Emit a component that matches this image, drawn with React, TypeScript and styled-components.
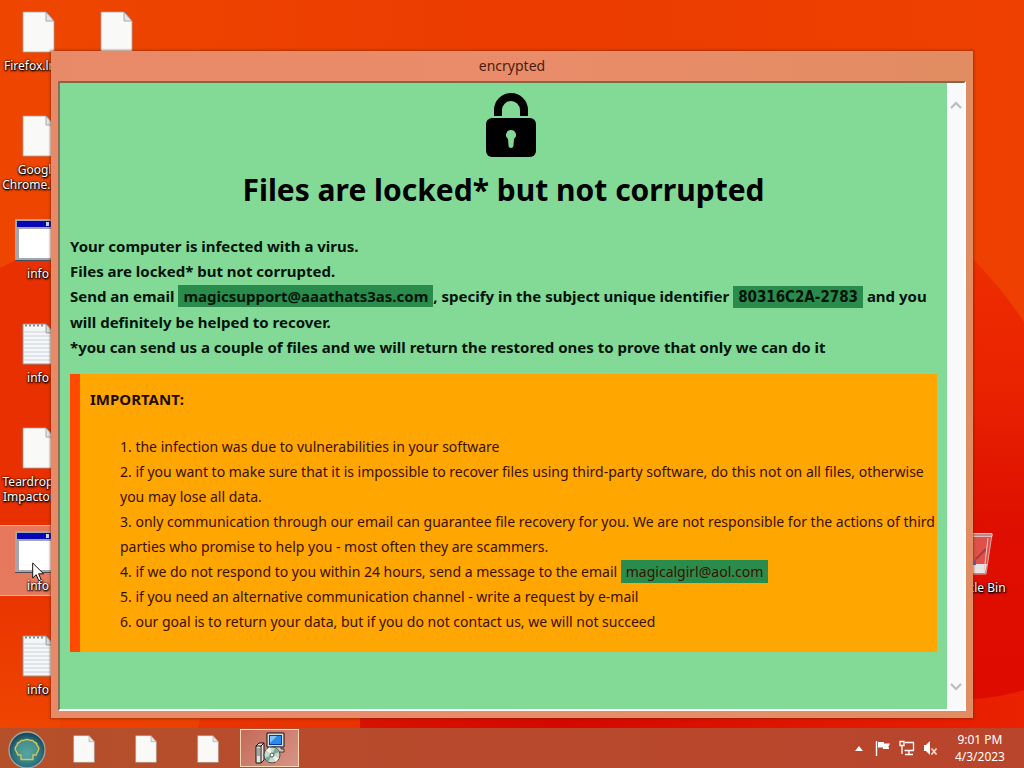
import React from 'react';
import styled, { createGlobalStyle, css } from 'styled-components';

const Global = createGlobalStyle`
  *, *::before, *::after { box-sizing: border-box; }
  html, body { margin: 0; padding: 0; }
  button { font: inherit; color: inherit; padding: 0; border: 0; background: none; }
`;

const Desktop = styled.div`
  position: relative;
  display: flex;
  flex-direction: column;
  min-height: 100vh;
  overflow: hidden;
  isolation: isolate;
  background: #e93200;
  font-family: 'Noto Sans', 'Open Sans', sans-serif;
`;

const Wallpaper = styled.svg`
  position: absolute;
  inset: 0;
  width: 100%;
  height: 100%;
  z-index: -1;
`;

const Workspace = styled.main`
  position: relative;
  flex: 1;
  display: flex;
  flex-direction: column;
  padding: 51px 51px 10px;
`;

const IconGrid = styled.div`
  position: absolute;
  inset: 0 0 0 -1px;
  display: grid;
  grid-auto-flow: column;
  grid-template-rows: repeat(7, 104px);
  grid-auto-columns: 78px;
  justify-content: start;
`;

const Shortcut = styled.button<{ $selected?: boolean; $col: number; $row: number }>`
  grid-column: ${(p) => p.$col};
  grid-row: ${(p) => p.$row};
  align-self: start;
  display: flex;
  flex-direction: column;
  align-items: center;
  gap: 5px;
  height: 71px;
  margin-top: 5px;
  padding-top: 6px;
  font-size: 12px;
  line-height: 15px;
  color: #fff;
  text-shadow: 1px 1px 2px #000, 0 1px 2px #000, 0 0 2px #000;
  white-space: pre;
  ${(p) =>
    p.$selected &&
    css`
      background: rgba(228, 180, 170, 0.55);
      box-shadow: inset 0 0 0 1px rgba(255, 210, 190, 0.6);
    `}
  svg {
    flex: none;
  }
`;

const AppWindow = styled.section`
  position: relative;
  flex: 1;
  display: flex;
  flex-direction: column;
  padding: 0 7px 7px;
  background: linear-gradient(90deg, #e88a68, #ea8c6a 50%, #e28c62);
  box-shadow: 0 0 2px 1px rgba(110, 40, 10, 0.55);
`;

const TitleBar = styled.header`
  height: 30px;
  line-height: 30px;
  font-size: 14px;
  text-align: center;
  color: #4a1c10;
`;

const Client = styled.div`
  flex: 1;
  display: flex;
  border: 2px solid #fff;
  border-top-color: #86654a;
  border-left-color: #86705a;
  background: #83d996;
`;

const Note = styled.article`
  flex: 1;
  min-width: 0;
  padding: 10px 10px 55px;
  font-size: 15px;
  line-height: 25px;
  color: #04140a;
`;

const NoteHead = styled.div`
  display: flex;
  flex-direction: column;
  align-items: center;
  padding-left: 15px;
`;

const Headline = styled.h1`
  margin: 8px 15px 0 0;
  font-size: 30px;
  line-height: 48px;
  color: #000;
`;

const Lead = styled.p`
  margin: 20px 0 14px;
  font-weight: bold;
`;

const Mark = styled.span`
  padding: 1px 5px;
  background: #2a8c4c;
`;

const Identifier = styled(Mark)`
  padding: 2px 5px;
  font-family: 'DejaVu Sans Condensed', 'DejaVu Sans', sans-serif;
  font-stretch: condensed;
`;

const Important = styled.div`
  padding: 13px 0 18px 10px;
  border-left: 10px solid #ff4a00;
  background: #ffa600;
  color: #3a1000;
`;

const ImportantTitle = styled.h2`
  margin: 0 0 22px;
  font-size: 15px;
  line-height: 25px;
  color: #1c0c00;
`;

const Rules = styled.ol`
  margin: 0;
  padding: 0 0 0 30px;
  list-style-position: inside;
  font-size: 14px;

  ${Mark} {
    padding: 2px 5px;
  }
`;

const Scrollbar = styled.div`
  display: flex;
  flex-direction: column;
  justify-content: space-between;
  width: 17px;
  padding: 15px 2px;
  background: #f9f8fa;
`;

const ScrollButton = styled.button`
  height: 14px;
  display: flex;
  align-items: center;
  justify-content: center;
`;

const Taskbar = styled.footer`
  display: flex;
  align-items: stretch;
  height: 40px;
  padding: 1px 19px 1px 7px;
  background: linear-gradient(90deg, #b4502a, #b84a2c 40%, #b8452c);
  color: #fff;
`;

const StartButton = styled.button`
  width: 40px;
  margin-right: 7px;
  padding-top: 2px;
`;

const TaskButton = styled.button<{ $active?: boolean }>`
  display: flex;
  align-items: center;
  justify-content: center;
  width: 59px;
  margin-right: 3px;
  padding-top: 2px;
  ${(p) =>
    p.$active &&
    css`
      padding-top: 0;
      background: linear-gradient(135deg, #c46a58, #d79486);
      border: 1px solid #f8d8b4;
    `}
`;

const Tray = styled.div`
  display: flex;
  align-items: center;
  gap: 8px;
  margin-left: auto;
`;

const TrayButton = styled.button`
  display: flex;
  justify-content: center;
  width: 16px;
`;

const Clock = styled.time`
  margin-left: 8px;
  font-size: 12px;
  line-height: 17px;
  text-align: center;
`;

const Pointer = styled.svg`
  position: absolute;
  left: 32px;
  top: 562px;
`;

const FileGlyph = ({ width = 33, height = 42 }: { width?: number; height?: number }) => (
  <svg width={width} height={height} viewBox="0 0 33 42" aria-hidden="true">
    <path d="M1 1h23l8 9v31H1z" fill="#f9f9f8" stroke="#a9a19a" strokeWidth=".8" />
    <path d="M24 1v9h8z" fill="#e6e6e8" stroke="#9a9693" strokeWidth=".8" />
  </svg>
);

const TextGlyph = () => (
  <svg width="33" height="42" viewBox="0 0 33 42" aria-hidden="true">
    <path d="M1 1h23l8 9v31H1z" fill="#f4f6f8" stroke="#97938f" />
    <path d="M24 1v9h8z" fill="#d6d9dd" stroke="#8d8b8a" strokeWidth=".8" />
    <path d="M3 2.500h20" stroke="#8c8c8c" strokeWidth="2" strokeDasharray="2 2" />
    <path
      d="M2 9h21M2 13h29M2 17h29M2 21h29M2 25h29M2 29h29M2 33h29M2 37h29"
      stroke="#ccd2da"
    />
  </svg>
);

const HtaGlyph = () => (
  <svg width="46" height="42" viewBox="0 0 46 42" aria-hidden="true">
    <path d="M0 0h46v42H0z" fill="#a5a5ad" />
    <path d="M0 41.500h46M45.500 0v42" stroke="#4b4b55" />
    <path d="M2 2h42v6H2z" fill="#0508b4" />
    <path d="M31 3h3v4h-3zM36 3h6v4h-6z" fill="#d0d0dc" />
    <path d="M4 10h38v29H4z" fill="#fff" />
  </svg>
);

const BinGlyph = () => (
  <svg width="38" height="44" viewBox="0 0 38 44" aria-hidden="true">
    <path d="M1 3h36l-6 40H7z" fill="#e08a86" fillOpacity=".55" stroke="#d8a8a4" />
    <path d="M5 33h27l-2 9H8z" fill="#e8e4e6" />
    <path d="M31 18l-10 10" stroke="#a83a44" strokeWidth="2" />
    <path d="M18 34l3-8v8z" fill="#4a62b8" />
    <path d="M1 2.500h36v3H1z" fill="#b98c8c" stroke="#e9d2d0" strokeWidth=".8" />
    <path d="M33 7l-4 34" stroke="#f0c8c4" />
  </svg>
);

const LockGlyph = () => (
  <svg width="50" height="65" viewBox="0 0 50 65" role="img" aria-label="Locked">
    <path d="M12 23V17a13 13 0 0 1 26 0v6" fill="none" stroke="#000" strokeWidth="8" />
    <rect y="25" width="50" height="39" rx="6" />
    <path
      d="M25 37a5 5 0 0 0-3 9l.6 7q.2 2 2.400 2t2.400-2l.6-7a5 5 0 0 0-3-9z"
      fill="#83d996"
    />
  </svg>
);

const Chevron = ({ down }: { down?: boolean }) => (
  <svg width="12" height="10" viewBox="0 0 12 10" aria-hidden="true">
    <path
      d={down ? 'M1 2l5 5 5-5' : 'M1 8l5-5 5 5'}
      fill="none"
      stroke="#bdbbc0"
      strokeWidth="2.200"
    />
  </svg>
);

const ShellGlyph = () => (
  <svg width="38" height="38" viewBox="0 0 38 38" aria-hidden="true">
    <defs>
      <radialGradient id="orb" cx=".5" cy=".6" r=".55">
        <stop offset="0" stopColor="#4fa3a6" />
        <stop offset=".7" stopColor="#2b6f7a" />
        <stop offset="1" stopColor="#184a58" />
      </radialGradient>
    </defs>
    <circle cx="19" cy="19" r="18" fill="url(#orb)" stroke="#a7a49c" strokeWidth="1.300" />
    <path
      d="M13 28.500v-4.500h-3l-2.500-5q-1-3 1.500-4.500 0-3 3-3.500 1-2.200 3.500-1.500 3.500-2 7 0 2.500-.7 3.500 1.500 3 .5 3 3.500 2.500 1.500 1.500 4.500l-2.500 5h-3v4.500z"
      fill="#5ba79c"
      fillOpacity=".5"
      stroke="#cfc65a"
      strokeWidth="1.400"
    />
  </svg>
);

const InstallerGlyph = () => (
  <svg width="32" height="32" viewBox="0 0 32 32" aria-hidden="true">
    <path d="M13 1h17v14H13z" fill="#d8dcdc" stroke="#111" />
    <path d="M15 3h13v10H15z" fill="#0a3aa8" />
    <path d="M16 4h11v8H16z" fill="#2a8ae8" />
    <path d="M16 4h7l-7 7z" fill="#7cc4fa" />
    <path d="M18 15h9v2h3v3H15v-3h3z" fill="#c8c8c4" stroke="#222" strokeWidth=".8" />
    <path d="M2 14l3-3h5v17l-3 3H2z" fill="#e6e2da" stroke="#111" />
    <path d="M7 14v17M2 14h5l3-3" fill="none" stroke="#111" />
    <path d="M3 16h3v8H3z" fill="#a8a49c" />
    <circle cx="18" cy="23" r="8" fill="#c9d8cc" stroke="#333" strokeWidth=".8" />
    <path d="M18 23l-6-5 4-3zM18 23l7 3-3 4z" fill="#eef4ee" />
    <path d="M18 23l3-7 4 4zM18 23l-4 7-3-4z" fill="#6fae90" />
    <circle cx="18" cy="23" r="2" fill="#fff" stroke="#555" />
  </svg>
);

const FlagGlyph = () => (
  <svg width="16" height="16" viewBox="0 0 16 16" aria-hidden="true">
    <path d="M1.500 1v15" stroke="#fff" strokeWidth="1.400" />
    <path d="M3 2h6v1.500h6l-1.500 3L14 9H8V7.500H3z" fill="#fff" />
  </svg>
);

const NetworkGlyph = () => (
  <svg width="16" height="16" viewBox="0 0 16 16" fill="none" stroke="#fff" aria-hidden="true">
    <path d="M6 2.500h8.500v8H5.500" strokeWidth="1.300" />
    <path d="M10 11v3M6 14.500h8" strokeWidth="1.300" />
    <path d="M1 1.500h4v4H1zM3 6v8" strokeWidth="1.300" />
  </svg>
);

const MutedGlyph = () => (
  <svg width="16" height="16" viewBox="0 0 16 16" aria-hidden="true">
    <path d="M1 5h2l4-4v14l-4-4H1z" fill="#fff" />
    <path d="M8.500 8.500l5 6M13.500 8.500l-5 6" stroke="#ffd9d2" strokeWidth="1.700" />
  </svg>
);

type Kind = 'file' | 'text' | 'hta' | 'bin';
const glyphs: Record<Kind, () => React.ReactElement> = {
  file: () => <FileGlyph />,
  text: TextGlyph,
  hta: HtaGlyph,
  bin: BinGlyph,
};

const shortcuts: { label: string; kind: Kind; col: number; row: number; selected?: boolean }[] = [
  { label: 'Firefox.lnk...', kind: 'file', col: 1, row: 1 },
  { label: 'Google\nChrome.lnk..', kind: 'file', col: 1, row: 2 },
  { label: 'info', kind: 'hta', col: 1, row: 3 },
  { label: 'info', kind: 'text', col: 1, row: 4 },
  { label: 'Teardrop.lnk\nImpactor.lnk', kind: 'file', col: 1, row: 5 },
  { label: 'info', kind: 'hta', col: 1, row: 6, selected: true },
  { label: 'info', kind: 'text', col: 1, row: 7 },
  { label: '', kind: 'file', col: 2, row: 1 },
  { label: 'Recycle Bin', kind: 'bin', col: 13, row: 6 },
];

const rules: React.ReactNode[] = [
  'the infection was due to vulnerabilities in your software',
  'if you want to make sure that it is impossible to recover files using third-party software, do this not on all files, otherwise you may lose all data.',
  'only communication through our email can guarantee file recovery for you. We are not responsible for the actions of third parties who promise to help you - most often they are scammers.',
  <>
    if we do not respond to you within 24 hours, send a message to the email{' '}
    <Mark>magicalgirl@aol.com</Mark>
  </>,
  'if you need an alternative communication channel - write a request by e-mail',
  'our goal is to return your data, but if you do not contact us, we will not succeed',
];

export default function App() {
  return (
    <>
      <Global />
      <Desktop>
        <Wallpaper viewBox="0 0 1024 768" preserveAspectRatio="none" aria-hidden="true">
          <defs>
            <linearGradient id="sky" x1="0" y1="0" x2="1" y2="0">
              <stop offset="0" stopColor="#ee4600" />
              <stop offset=".5" stopColor="#ec3c00" />
              <stop offset="1" stopColor="#ee4000" />
            </linearGradient>
            <linearGradient id="fold" x1="0" y1="0" x2="0" y2="1">
              <stop offset="0" stopColor="#e83000" />
              <stop offset=".6" stopColor="#e83000" />
              <stop offset="1" stopColor="#f04a00" />
            </linearGradient>
            <linearGradient id="side" x1="0" y1="0" x2="0" y2="1">
              <stop offset="0" stopColor="#ee2e00" />
              <stop offset=".3" stopColor="#e92200" />
              <stop offset=".6" stopColor="#de0e00" />
              <stop offset="1" stopColor="#de0c00" />
            </linearGradient>
            <linearGradient id="floor" x1="0" y1="0" x2="1" y2="0">
              <stop offset="0" stopColor="#d81200" />
              <stop offset=".3" stopColor="#d40800" />
              <stop offset="1" stopColor="#ea2200" />
            </linearGradient>
          </defs>
          <path d="M0 0h1024v768H0z" fill="url(#sky)" />
          <path d="M0 268L60 238V768H0z" fill="url(#fold)" />
          <path d="M60 700H360V768H60z" fill="#ec4000" />
          <path d="M190 768L204 700H364V768z" fill="#e83200" />
          <path d="M964 250Q1000 285 1024 322V720H964z" fill="url(#side)" />
          <path d="M360 700H964Q1000 698 1024 690V768H360z" fill="url(#floor)" />
        </Wallpaper>
        <Workspace>
          <IconGrid>
            {shortcuts.map((s) => {
              const Glyph = glyphs[s.kind];
              return (
                <Shortcut
                  key={`${s.col}-${s.row}`}
                  $col={s.col}
                  $row={s.row}
                  $selected={s.selected}
                  aria-label={s.label || 'File'}
                >
                  <Glyph />
                  {s.label}
                </Shortcut>
              );
            })}
          </IconGrid>
          <AppWindow>
            <TitleBar>encrypted</TitleBar>
            <Client>
              <Note>
                <NoteHead>
                  <LockGlyph />
                  <Headline>Files are locked* but not corrupted</Headline>
                </NoteHead>
                <Lead>
                  Your computer is infected with a virus.
                  <br />
                  Files are locked* but not corrupted.
                  <br />
                  Send an email <Mark>magicsupport@aaathats3as.com</Mark>, specify in the subject
                  unique identifier <Identifier>80316C2A-2783</Identifier> and you will definitely
                  be helped to recover.
                  <br />
                  *you can send us a couple of files and we will return the restored ones to prove
                  that only we can do it
                </Lead>
                <Important>
                  <ImportantTitle>IMPORTANT:</ImportantTitle>
                  <Rules>
                    {rules.map((rule, i) => (
                      <li key={i}>{rule}</li>
                    ))}
                  </Rules>
                </Important>
              </Note>
              <Scrollbar>
                <ScrollButton aria-label="Scroll up">
                  <Chevron />
                </ScrollButton>
                <ScrollButton aria-label="Scroll down">
                  <Chevron down />
                </ScrollButton>
              </Scrollbar>
            </Client>
          </AppWindow>
          <Pointer width="13" height="20" viewBox="0 0 13 20" aria-hidden="true">
            <path d="M.7 1v15l3.500-3.300 2.600 6 2.400-1-2.600-5.900h5z" fill="#fff" stroke="#111" />
          </Pointer>
        </Workspace>
        <Taskbar>
          <StartButton aria-label="Start">
            <ShellGlyph />
          </StartButton>
          {[1, 2, 3].map((n) => (
            <TaskButton key={n} aria-label={`Pinned file ${n}`}>
              <FileGlyph width={24} height={28} />
            </TaskButton>
          ))}
          <TaskButton $active aria-label="encrypted">
            <InstallerGlyph />
          </TaskButton>
          <Tray>
            <TrayButton aria-label="Show hidden icons">
              <svg width="8" height="5" viewBox="0 0 8 5" aria-hidden="true">
                <path d="M0 5l4-5 4 5z" fill="#fff" />
              </svg>
            </TrayButton>
            <TrayButton aria-label="Action Center">
              <FlagGlyph />
            </TrayButton>
            <TrayButton aria-label="Network">
              <NetworkGlyph />
            </TrayButton>
            <TrayButton aria-label="Volume muted">
              <MutedGlyph />
            </TrayButton>
            <Clock>
              9:01 PM
              <br />
              4/3/2023
            </Clock>
          </Tray>
        </Taskbar>
      </Desktop>
    </>
  );
}
